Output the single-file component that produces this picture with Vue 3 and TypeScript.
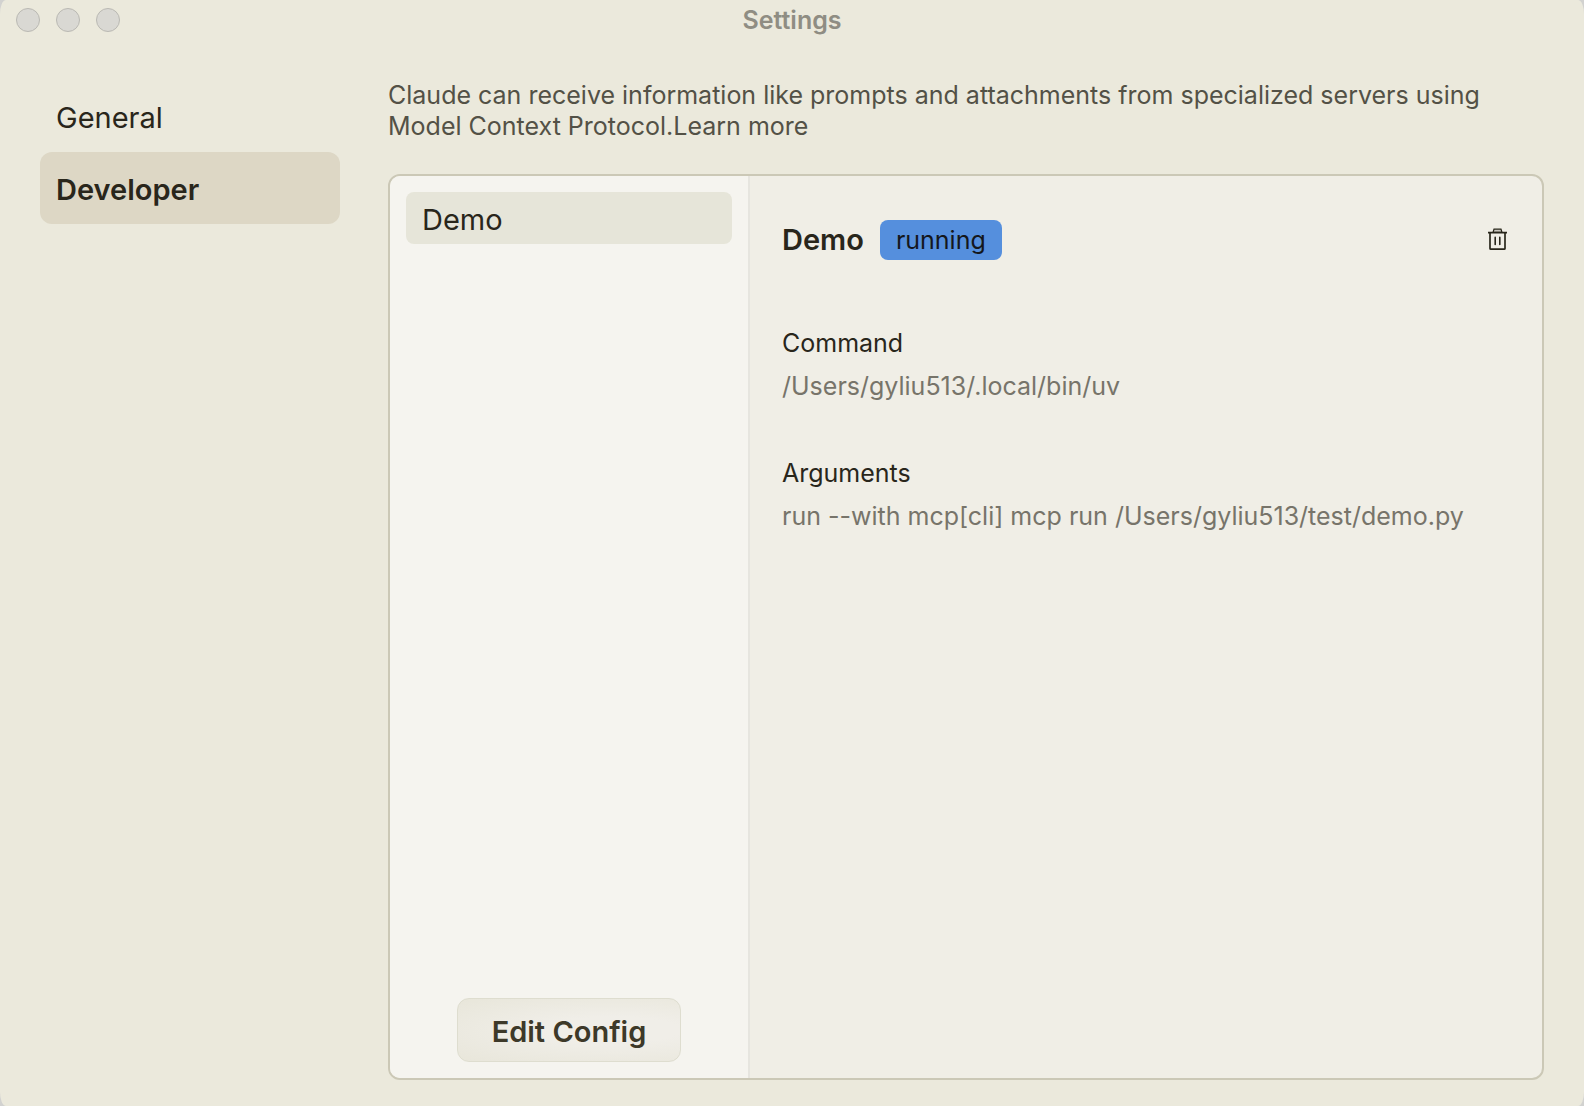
<script setup lang="ts">
import { computed, ref } from 'vue'

interface Server {
  name: string
  status: string
  command: string
  args: string
}

const sections: string[] = ['General', 'Developer']
const activeSection = ref('Developer')

const servers: Server[] = [
  {
    name: 'Demo',
    status: 'running',
    command: '/Users/gyliu513/.local/bin/uv',
    args: 'run --with mcp[cli] mcp run /Users/gyliu513/test/demo.py',
  },
]
const selectedIndex = ref(0)
const selected = computed<Server>(() => servers[selectedIndex.value])
</script>

<template>
  <div class="window">
    <header class="titlebar">
      <div class="lights">
        <button class="light" type="button" aria-label="Close"></button>
        <button class="light" type="button" aria-label="Minimize"></button>
        <button class="light" type="button" aria-label="Zoom"></button>
      </div>
      <h1 class="title">Settings</h1>
    </header>

    <div class="body">
      <nav class="nav">
        <button
          v-for="section in sections"
          :key="section"
          type="button"
          class="nav-item"
          :class="{ active: section === activeSection }"
          @click="activeSection = section"
        >
          {{ section }}
        </button>
      </nav>

      <main class="content">
        <p class="intro">
          Claude can receive information like prompts and attachments from specialized servers using
          Model Context Protocol.<a class="learn" href="#">Learn more</a>
        </p>

        <section class="panel">
          <aside class="servers">
            <div class="server-list">
              <button
                v-for="(server, index) in servers"
                :key="server.name"
                type="button"
                class="server"
                :class="{ active: index === selectedIndex }"
                @click="selectedIndex = index"
              >
                {{ server.name }}
              </button>
            </div>
            <button type="button" class="edit">Edit Config</button>
          </aside>

          <article class="detail">
            <div class="detail-head">
              <h2 class="name">{{ selected.name }}</h2>
              <span class="badge">{{ selected.status }}</span>
              <button type="button" class="trash" aria-label="Delete server">
                <svg width="24" height="24" viewBox="0 0 24 24" fill="none" stroke="currentColor">
                  <path d="M7 4.4 L8 1.2 H15 L16 4.4 Z" fill="#c9c6bd" stroke-width="1.2" />
                  <path d="M2 4.6 H21" stroke-width="1.6" />
                  <path d="M4 4.6 V20.4 Q4 21.2 4.8 21.2 H18.2 Q19 21.2 19 20.4 V4.6" stroke-width="1.7" />
                  <path d="M9.2 9.4 V16.4 M13.8 9.4 V16.4" stroke-width="1.6" stroke-linecap="round" />
                </svg>
              </button>
            </div>
            <dl class="fields">
              <div class="field">
                <dt>Command</dt>
                <dd>{{ selected.command }}</dd>
              </div>
              <div class="field">
                <dt>Arguments</dt>
                <dd>{{ selected.args }}</dd>
              </div>
            </dl>
          </article>
        </section>
      </main>
    </div>
  </div>
</template>

<style>
body {
  background: #d2d2d0;
}
</style>

<style scoped>
.window {
  box-sizing: border-box;
  min-height: 100vh;
  display: flex;
  flex-direction: column;
  background: #ebe9dc;
  border-radius: 6px / 14px;
  color: #29261b;
  font-family: Inter, "Noto Sans", sans-serif;
  font-size: 25px;
}
button {
  font: inherit;
  color: inherit;
  margin: 0;
  padding: 0;
  border: 0;
  background: none;
}
h1,
h2,
p,
dl,
dd {
  margin: 0;
}
.titlebar {
  display: grid;
  grid-template-columns: 1fr auto 1fr;
  align-items: center;
  height: 40px;
  padding: 0 16px;
}
.lights {
  display: flex;
  gap: 16px;
}
.light {
  box-sizing: border-box;
  width: 24px;
  height: 24px;
  border: 1px solid #bab9b3;
  border-radius: 50%;
  background: #d9d8d3;
}
.title {
  font-size: 25px;
  line-height: 32px;
  font-weight: 600;
  color: #8f8d83;
}
.body {
  flex: 1;
  display: flex;
  gap: 48px;
  padding: 40px 40px 26px;
}
.nav {
  flex: none;
  width: 300px;
  display: flex;
  flex-direction: column;
}
.nav-item {
  height: 72px;
  padding: 2px 16px 0;
  border-radius: 12px;
  font-size: 29px;
  text-align: left;
}
.nav-item.active {
  background: #ddd7c5;
  font-weight: 600;
}
.content {
  flex: 1;
  min-width: 0;
  display: flex;
  flex-direction: column;
  gap: 32px;
}
.intro {
  line-height: 31px;
  color: #535146;
}
.learn {
  color: inherit;
  text-decoration: none;
}
.panel {
  flex: 1;
  display: flex;
  border: 2px solid #cbc8b6;
  border-radius: 12px;
  overflow: hidden;
  background: #f0eee6;
}
.servers {
  box-sizing: border-box;
  flex: none;
  width: 360px;
  display: flex;
  flex-direction: column;
  justify-content: space-between;
  padding: 16px;
  border-right: 2px solid #e6e5df;
  background: #f5f4ef;
}
.server-list {
  display: flex;
  flex-direction: column;
}
.server {
  height: 52px;
  padding: 2px 16px 0;
  border-radius: 8px;
  font-size: 29px;
  text-align: left;
}
.server.active {
  background: #e6e5d9;
}
.edit {
  align-self: center;
  height: 64px;
  padding: 2px 34px 0;
  border: 1px solid #deddcf;
  border-radius: 12px;
  background: radial-gradient(ellipse at 70% 50%, #f0eee8 30%, #e8e6da 100%);
  color: #3d3929;
  font-size: 29px;
  font-weight: 600;
}
.detail {
  flex: 1;
  min-width: 0;
  padding: 44px 32px;
}
.detail-head {
  display: flex;
  align-items: center;
  gap: 16px;
}
.name {
  font-size: 29px;
  line-height: 40px;
  font-weight: 600;
}
.badge {
  padding: 0 16px;
  border-radius: 8px;
  background: #558fdd;
  color: #14171c;
  line-height: 40px;
}
.trash {
  display: flex;
  margin-left: auto;
}
.fields {
  display: flex;
  flex-direction: column;
  gap: 44px;
  padding-top: 62px;
}
.field {
  display: flex;
  flex-direction: column;
  line-height: 43px;
}
.field dd {
  color: #77746a;
}
</style>
